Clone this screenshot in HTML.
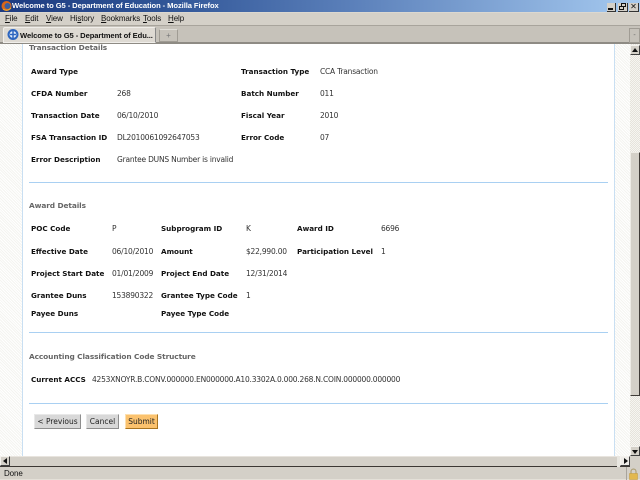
<!DOCTYPE html>
<html><head><meta charset="utf-8"><title>Welcome to G5</title>
<style>
html,body{margin:0;padding:0;width:640px;height:480px;overflow:hidden;background:#fff}
*{box-sizing:border-box}
div,span{position:absolute}
.t{font:7.5px/12px "DejaVu Sans","Liberation Sans",sans-serif;color:#333;white-space:nowrap;letter-spacing:-.21px}
.b{font-weight:bold;color:#111;font-size:7.2px;letter-spacing:0}
.h{font:bold 7.4px/12px "DejaVu Sans",sans-serif;color:#666;white-space:nowrap;letter-spacing:-.1px}
.m{font:8px/12px "Liberation Sans",sans-serif;color:#111;white-space:nowrap;letter-spacing:-.1px}
.hr{left:29px;width:579px;height:1px;background:#a9d0f2}
.hatch{background:repeating-linear-gradient(45deg,#f4f4f0 0 1px,#fff 1px 2px)}
.btn{top:414px;height:15px;border:1px solid #e8e8e8;border-right-color:#8e8e8e;border-bottom-color:#8e8e8e;background:#d8d8d8;font:7.5px/13px "DejaVu Sans",sans-serif;color:#222;text-align:center;white-space:nowrap}
.sb{background:#d4d0c8;border:1px solid;border-color:#f4f2ee #404040 #404040 #f4f2ee}
</style></head>
<body>
<div style="left:0;top:0;width:640px;height:12px;background:linear-gradient(90deg,#1c3a80 0,#2f5496 25%,#5b80ba 55%,#a6caf0 100%)"></div>
<svg style="position:absolute;left:1px;top:0" width="11" height="12"><circle cx="5.5" cy="6" r="5" fill="#d9661a"/><circle cx="6.5" cy="6" r="3" fill="#3a5fa0"/><path d="M2 9Q6 12 10 8" stroke="#f0b030" fill="none"/></svg>
<div style="left:12px;top:0;font:bold 7.6px/12px 'Liberation Sans',sans-serif;color:#fff;white-space:nowrap;letter-spacing:-.08px">Welcome to G5 - Department of Education - Mozilla Firefox</div>
<div style="left:607px;top:3px;width:9px;height:9px;background:#d4d0c8;border-right:1px solid #333;border-bottom:1px solid #333"><span style="left:1px;top:5px;width:5px;height:2px;background:#111"></span></div>
<div style="left:618px;top:3px;width:10px;height:9px;background:#d4d0c8;border-right:1px solid #333;border-bottom:1px solid #333"><span style="left:3px;top:0;width:5px;height:4px;border:1px solid #111"></span><span style="left:1px;top:3px;width:5px;height:4px;border:1px solid #111;background:#d4d0c8"></span></div>
<div style="left:629px;top:3px;width:10px;height:9px;background:#d4d0c8;border-right:1px solid #333;border-bottom:1px solid #333;font:bold 8px/8px 'DejaVu Sans',sans-serif;color:#111;text-align:center">✕</div>

<div style="left:0;top:12px;width:640px;height:14px;background:#d4d0c8;border-top:1px solid #dcd8d0;border-bottom:1px solid #a8a49c"></div>
<div class="m" style="left:5px;top:13px"><u>F</u>ile</div>
<div class="m" style="left:25px;top:13px"><u>E</u>dit</div>
<div class="m" style="left:46px;top:13px"><u>V</u>iew</div>
<div class="m" style="left:70px;top:13px">Hi<u>s</u>tory</div>
<div class="m" style="left:101px;top:13px"><u>B</u>ookmarks</div>
<div class="m" style="left:143px;top:13px"><u>T</u>ools</div>
<div class="m" style="left:168px;top:13px"><u>H</u>elp</div>

<div style="left:0;top:26px;width:640px;height:18px;background:#c6c2ba;border-bottom:2px solid #8e8b84"></div>
<div style="left:3px;top:27px;width:153px;height:16px;background:#dedad3;border:1px solid #f0eeea;border-right-color:#888;border-radius:2px 2px 0 0"></div>
<svg style="position:absolute;left:7px;top:28px" width="12" height="13"><circle cx="6" cy="6.5" r="5.5" fill="#2e66c0"/><circle cx="6" cy="6.5" r="3.4" fill="#e4eefa"/><path d="M6 3v7M3 6.500h6" stroke="#2e66c0" stroke-width="1.500"/></svg>
<div class="m" style="left:20px;top:30px;font-weight:bold;font-size:7.6px;letter-spacing:-.08px">Welcome to G5 - Department of Edu...</div>
<div style="left:159px;top:29px;width:19px;height:13px;background:#c6c2ba;border:1px solid #a09c94;border-top-color:#e0ded8;font:8px/11px sans-serif;color:#777;text-align:center">+</div>
<div style="left:629px;top:28px;width:11px;height:15px;background:#c6c2ba;border:1px solid #a09c94;font:7px/13px sans-serif;color:#666;text-align:center">-</div>

<div class="hatch" style="left:0;top:44px;width:23px;height:412px;border-right:1px solid #c9dff2"></div>
<div class="hatch" style="left:614px;top:44px;width:16px;height:412px;border-left:1px solid #c9dff2"></div>
<div style="left:630px;top:44px;width:10px;height:412px;background:repeating-conic-gradient(#e6e3dc 0 25%,#f6f5f1 0 50%) 0 0/2px 2px"></div>
<div class="sb" style="left:630px;top:45px;width:10px;height:10px"><span style="left:1px;top:2px;width:0;height:0;border:3px solid transparent;border-top:0;border-bottom:4px solid #111"></span></div>
<div class="sb" style="left:630px;top:152px;width:10px;height:244px;border-color:#eeece6 #403c38 #403c38 #eeece6"></div>
<div class="sb" style="left:630px;top:446px;width:10px;height:10px"><span style="left:1px;top:3px;width:0;height:0;border:3px solid transparent;border-bottom:0;border-top:4px solid #111"></span></div>

<div class="h" style="left:29px;top:42px">Transaction Details</div>
<div class="t b" style="left:31px;top:66px">Award Type</div>
<div class="t b" style="left:241px;top:66px">Transaction Type</div>
<div class="t" style="left:320px;top:66px">CCA Transaction</div>
<div class="t b" style="left:31px;top:88px">CFDA Number</div>
<div class="t" style="left:117px;top:88px">268</div>
<div class="t b" style="left:241px;top:88px">Batch Number</div>
<div class="t" style="left:320px;top:88px">011</div>
<div class="t b" style="left:31px;top:110px">Transaction Date</div>
<div class="t" style="left:117px;top:110px">06/10/2010</div>
<div class="t b" style="left:241px;top:110px">Fiscal Year</div>
<div class="t" style="left:320px;top:110px">2010</div>
<div class="t b" style="left:31px;top:132px">FSA Transaction ID</div>
<div class="t" style="left:117px;top:132px">DL2010061092647053</div>
<div class="t b" style="left:241px;top:132px">Error Code</div>
<div class="t" style="left:320px;top:132px">07</div>
<div class="t b" style="left:31px;top:154px">Error Description</div>
<div class="t" style="left:117px;top:154px">Grantee DUNS Number is invalid</div>
<div class="hr" style="top:182px"></div>

<div class="h" style="left:29px;top:200px">Award Details</div>
<div class="t b" style="left:31px;top:223px">POC Code</div>
<div class="t" style="left:112px;top:223px">P</div>
<div class="t b" style="left:161px;top:223px">Subprogram ID</div>
<div class="t" style="left:246px;top:223px">K</div>
<div class="t b" style="left:297px;top:223px">Award ID</div>
<div class="t" style="left:381px;top:223px">6696</div>
<div class="t b" style="left:31px;top:246px">Effective Date</div>
<div class="t" style="left:112px;top:246px">06/10/2010</div>
<div class="t b" style="left:161px;top:246px">Amount</div>
<div class="t" style="left:246px;top:246px">$22,990.00</div>
<div class="t b" style="left:297px;top:246px">Participation Level</div>
<div class="t" style="left:381px;top:246px">1</div>
<div class="t b" style="left:31px;top:268px">Project Start Date</div>
<div class="t" style="left:112px;top:268px">01/01/2009</div>
<div class="t b" style="left:161px;top:268px">Project End Date</div>
<div class="t" style="left:246px;top:268px">12/31/2014</div>
<div class="t b" style="left:31px;top:290px">Grantee Duns</div>
<div class="t" style="left:112px;top:290px">153890322</div>
<div class="t b" style="left:161px;top:290px">Grantee Type Code</div>
<div class="t" style="left:246px;top:290px">1</div>
<div class="t b" style="left:31px;top:308px">Payee Duns</div>
<div class="t b" style="left:161px;top:308px">Payee Type Code</div>
<div class="hr" style="top:332px"></div>

<div class="h" style="left:29px;top:351px">Accounting Classification Code Structure</div>
<div class="t b" style="left:31px;top:374px">Current ACCS</div>
<div class="t" style="left:92px;top:374px">4253XNOYR.B.CONV.000000.EN000000.A10.3302A.0.000.268.N.COIN.000000.000000</div>
<div class="hr" style="top:403px"></div>

<div class="btn" style="left:34px;width:47px">&lt; Previous</div>
<div class="btn" style="left:86px;width:33px">Cancel</div>
<div class="btn" style="left:125px;width:33px;background:#fbc26e;border-color:#fde0b0 #a87420 #a87420 #fde0b0">Submit</div>

<div style="left:0;top:456px;width:640px;height:11px;background:#d4d0c8;border-bottom:1px solid #3c3834;border-top:1px solid #e8e4de"></div>
<div class="sb" style="left:0;top:456px;width:10px;height:10px"><span style="left:2px;top:1px;width:0;height:0;border:3px solid transparent;border-left:0;border-right:4px solid #111"></span></div>
<div style="left:617px;top:456px;width:3px;height:11px;background:#e8e6e0"></div>
<div class="sb" style="left:620px;top:456px;width:10px;height:10px;background:#eeece8"><span style="left:3px;top:1px;width:0;height:0;border:3px solid transparent;border-right:0;border-left:4px solid #111"></span></div>
<div style="left:630px;top:456px;width:10px;height:11px;background:#d4d0c8"></div>

<div style="left:0;top:467px;width:640px;height:13px;background:#d4d0c8;border-bottom:1px solid #e4e0d8"></div>
<div class="m" style="left:4px;top:468px">Done</div>
<div style="left:626px;top:467px;width:1px;height:13px;background:#a8a49c"></div>
<svg style="position:absolute;left:628px;top:468px" width="11" height="12"><path d="M3 6V3.500a2.500 2.500 0 0 1 5 0V6" fill="none" stroke="#a89868"/><rect x="1.500" y="5.500" width="8" height="6" fill="#e2b84e" stroke="#c09838" stroke-width=".5"/></svg>
</body></html>
